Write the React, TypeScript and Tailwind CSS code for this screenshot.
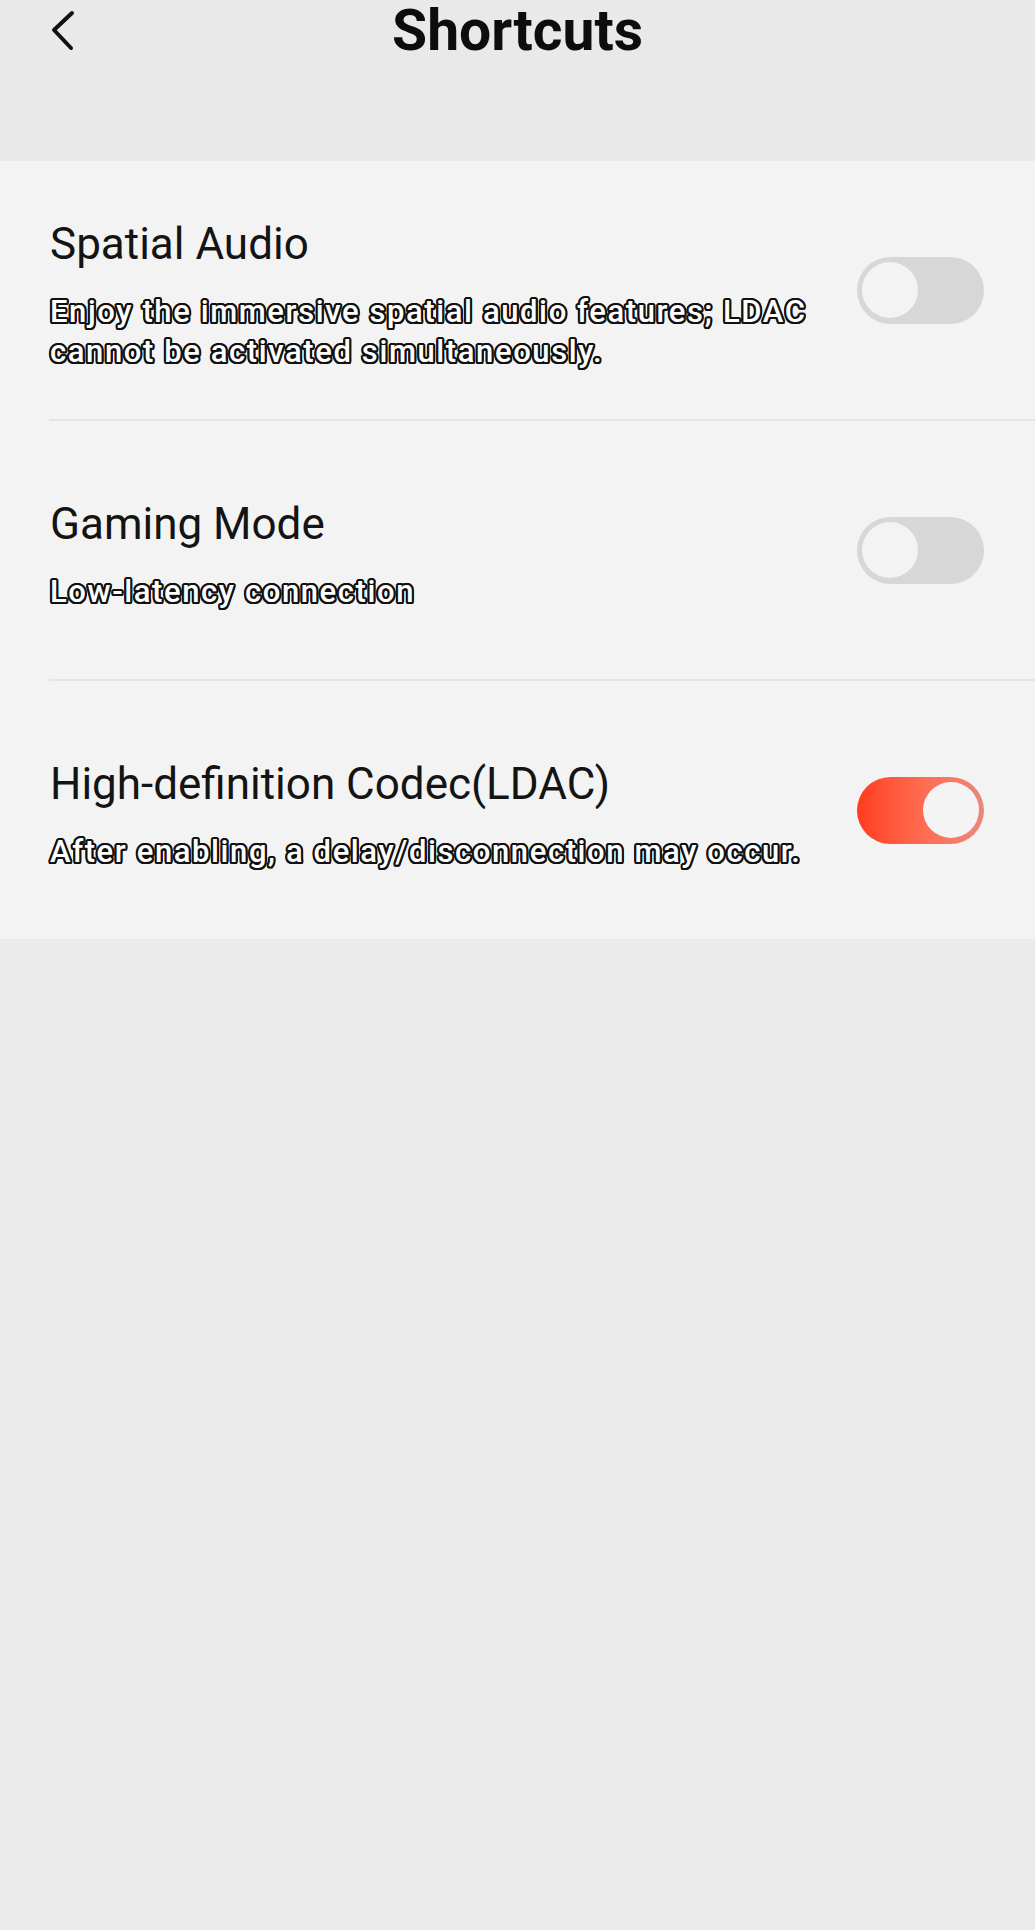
import React from "react";

const outline =
  "text-white font-medium [text-shadow:2px_0_0_#111,-2px_0_0_#111,0_2px_0_#111,0_-2px_0_#111,1.5px_1.5px_0_#111,-1.5px_1.5px_0_#111,1.5px_-1.5px_0_#111,-1.5px_-1.5px_0_#111,1px_2px_0_#111,-1px_2px_0_#111,1px_-2px_0_#111,-1px_-2px_0_#111,2px_1px_0_#111,-2px_1px_0_#111,2px_-1px_0_#111,-2px_-1px_0_#111]";

function Toggle({ on }: { on: boolean }) {
  if (on) {
    return (
      <div className="w-[127px] h-[67px] rounded-full bg-linear-to-r from-[#ff3a1c] via-[#ff6a4f] to-[#e8897d] flex items-center justify-end px-[5px] shrink-0">
        <div className="w-[56px] h-[56px] rounded-full bg-[#f4f4f4]" />
      </div>
    );
  }
  return (
    <div className="w-[127px] h-[67px] rounded-full bg-[#d7d7d7] flex items-center justify-start px-[5px] shrink-0">
      <div className="w-[56px] h-[56px] rounded-full bg-[#f3f3f3]" />
    </div>
  );
}

function Row({ title, desc, on }: { title: string; desc: string[]; on: boolean }) {
  return (
    <div className="h-[258px] flex items-center justify-between pl-[50px] pr-[51px]">
      <div className="flex flex-col pt-[10px]">
        <div className="text-[44px] leading-[52px] text-[#141414]">{title}</div>
        <div className={"mt-[22px] text-[31px] leading-[40px] tracking-[1.6px] " + outline}>
          {desc.map((d, i) => (
            <div key={i} className="whitespace-nowrap">{d}</div>
          ))}
        </div>
      </div>
      <Toggle on={on} />
    </div>
  );
}

export default function App() {
  return (
    <div
      className="w-[1035px] min-h-[1930px] bg-[#ebebeb]"
      style={{ fontFamily: "Roboto, 'Noto Sans', sans-serif" }}
    >
      <div className="h-[161px] bg-[#e9e9e9]">
        <div className="grid grid-cols-[1fr_auto_1fr] items-start pt-[2px]">
          <div className="pl-[50px] pt-[8px]">
            <svg width="26" height="42" viewBox="0 0 26 42" fill="none">
              <path
                d="M22 3 L4 20 L21 38"
                stroke="#111"
                strokeWidth="4"
                strokeLinecap="round"
                strokeLinejoin="round"
              />
            </svg>
          </div>
          <div className="text-[57px] leading-none font-bold text-[#0d0d0d]">Shortcuts</div>
          <div />
        </div>
      </div>
      <div className="bg-[#f3f3f3]">
        <Row
          title="Spatial Audio"
          desc={["Enjoy the immersive spatial audio features; LDAC", "cannot be activated simultaneously."]}
          on={false}
        />
        <div className="ml-[49px] h-[2px] bg-[#e5e5e5]" />
        <Row title="Gaming Mode" desc={["Low-latency connection"]} on={false} />
        <div className="ml-[49px] h-[2px] bg-[#e5e5e5]" />
        <Row
          title="High-definition Codec(LDAC)"
          desc={["After enabling, a delay/disconnection may occur."]}
          on={true}
        />
      </div>
    </div>
  );
}
